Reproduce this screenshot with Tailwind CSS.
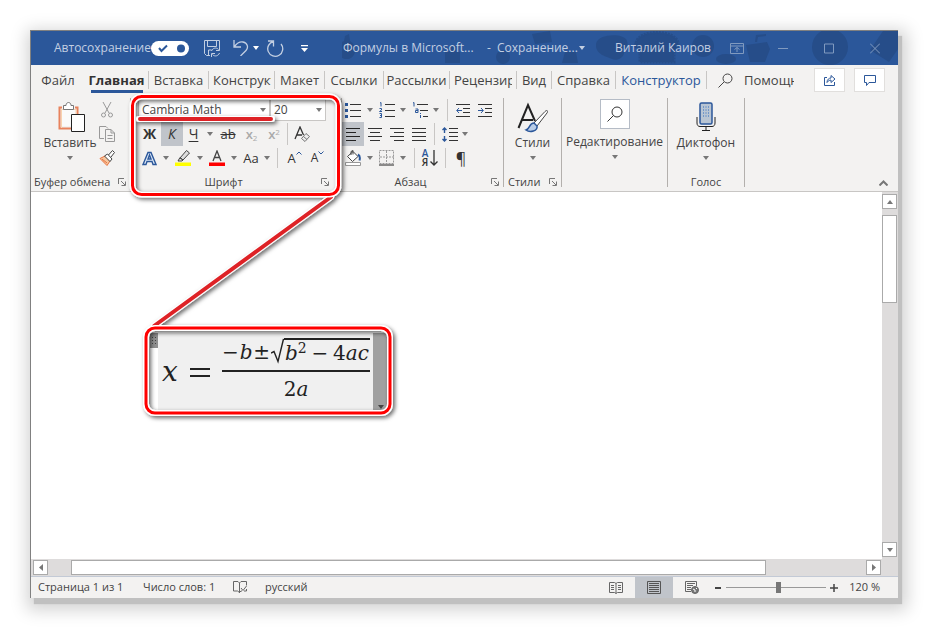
<!DOCTYPE html>
<html lang="ru">
<head>
    <meta charset="UTF-8">
    <meta name="viewport" content="width=device-width, initial-scale=1.0">
    <title>Формулы в Microsoft Word</title>
    <script src="https://cdn.jsdelivr.net/npm/@tailwindcss/browser@4"></script>
</head>
<body class="bg-white font-['Open_Sans','Noto_Sans',sans-serif] text-xs text-[#444]">

    <!-- Shared icons -->
    <svg class="hidden">
        <symbol id="caret" viewBox="0 0 6 4"><path d="M0 0h6L3 4z" fill="currentColor"/></symbol>
        <symbol id="launcher" viewBox="0 0 8 8"><path d="M.5 6V.5H6M3 3l4 4M7.500 3.500v4h-4" fill="none" stroke="#777"/></symbol>
    </svg>

    <div class="relative flex min-h-screen p-[30px]">
        <div class="flex min-w-0 flex-1 flex-col border-t border-l border-[#808080] bg-white shadow-[4px_6px_1px_0_#c0c0c0,3px_6px_16px_6px_rgba(0,0,0,0.18)]">

            <!-- Title bar -->
            <header class="relative flex h-[34px] shrink-0 items-center overflow-hidden bg-[#2b579a] text-[#c3cfe2]">
                <svg class="absolute top-0 right-0 h-[34px] w-[556px]" viewBox="0 0 556 34" fill="#264d89">
                    <path d="M24 28c-10-3-10-14-1-18l1-5 4-2 1 7c7 4 7 15-1 18zM124 32V21h4v-6h7v6h4v11z" transform="translate(-21 0)"/>
                    <circle cx="161" cy="26" r="7"/><path d="M190 3l18-3 2 11-17 2zM220 32l3-11h11l2 11z"/>
                    <path d="M254 13c2-11 29-11 31-3 2 6-2 6-3 12s-8 8-12 6-17-4-16-15z"/>
                    <path d="M294 12c2-14 40-14 42 0 1 5-4 6-4 10v9h-34v-9c-1-4-5-5-4-10z" stroke="#264d89" stroke-width="3" stroke-dasharray="2 1"/>
                    <circle cx="361" cy="15" r="11"/><ellipse cx="384" cy="28" rx="10" ry="5"/>
                    <path d="M404 14l21-3 3 7-5 13h-15zM413 11l1-7 10-1v2l-8 1-1 5z"/>
                    <circle cx="488" cy="16" r="18"/><path d="M528 19L541 0h15v18l-9 13z"/>
                </svg>
                <label for="autosave" class="relative ml-[23px] w-[97px]">Автосохранение</label>
                <div class="relative h-[15px] w-[38px] shrink-0 rounded-full bg-white">
                    <input id="autosave" type="checkbox" checked class="absolute inset-0 h-full w-full appearance-none rounded-full">
                    <svg class="pointer-events-none absolute inset-0" viewBox="0 0 38 15" fill="none"><path d="M8 7l2.500 3L16 4.500" stroke="#2b579a" stroke-width="2"/><circle cx="30" cy="7.500" r="4" fill="#2b579a"/></svg>
                </div>
                <button class="relative ml-[15px]" aria-label="Сохранить">
                    <svg class="h-[18px] w-[17px]" viewBox="0 0 17 18" fill="none" stroke="currentColor"><path d="M6 16.500H2.500l-2-2V1.500h15v7M3.500 1.500v6h9v-6M4.500 16v-5h3M7.500 12c1-3 5-4 7-1.500M15.500 8v3.500H12M15.500 14c-1 3-5 4-7 1.500M7.500 18v-3.500H11"/></svg>
                </button>
                <button class="relative ml-3" aria-label="Отменить">
                    <svg class="h-4 w-4" viewBox="0 0 16 16" fill="none" stroke="currentColor" stroke-width="1.300"><path d="M1 0v7h7M1.500 6.500C4 3 7 1.500 10 2c5 1 5.500 6 3 8.500L7.500 16"/></svg>
                </button>
                <button class="relative ml-1 text-white" aria-label="Список отмены"><svg class="h-1 w-1.5"><use href="#caret"/></svg></button>
                <button class="relative ml-2" aria-label="Повторить">
                    <svg class="h-[17px] w-[17px]" viewBox="0 0 17 17" fill="none" stroke="currentColor" stroke-width="1.300"><path d="M1 1h5.500v5.500M6.500 1.500A7.500 7.500 0 1 0 14 4"/></svg>
                </button>
                <button class="relative ml-[17px] text-white" aria-label="Настройка панели"><svg class="h-[7px] w-[7px]" viewBox="0 0 7 7" fill="currentColor"><path d="M0 0h7v1.200H0zM0 3h7L3.500 7z"/></svg></button>
                <span class="relative ml-[35px] w-36 whitespace-nowrap">Формулы в Microsoft...</span>
                <span class="relative w-2.5">-</span>
                <button class="relative flex w-[88px] items-center justify-between whitespace-nowrap">Сохранение... <svg class="h-1 w-1.5"><use href="#caret"/></svg></button>
                <span class="relative ml-[30px] whitespace-nowrap">Виталий Каиров</span>
                <div class="relative ml-auto flex text-[#809abf]">
                    <button class="mr-[34px]" aria-label="Параметры ленты"><svg class="h-[11px] w-[14px]" viewBox="0 0 14 11" fill="none" stroke="currentColor"><path d="M.5.5h13v10H.5zM.5 3h13M7 9V4.500M4.500 6.500L7 4.500l2.500 2"/></svg></button>
                    <button class="mr-9" aria-label="Свернуть"><svg class="h-[11px] w-[10px]" viewBox="0 0 10 11" stroke="currentColor"><path d="M0 5.500h10"/></svg></button>
                    <button class="mr-9" aria-label="Развернуть"><svg class="h-[11px] w-[10px]" viewBox="0 0 10 11" fill="none" stroke="currentColor"><path d="M.5 1h9v9h-9z"/></svg></button>
                    <button class="mr-[18px]" aria-label="Закрыть"><svg class="h-[11px] w-[10px]" viewBox="0 0 10 11" stroke="currentColor"><path d="M0 .5l10 10M10 .5l-10 10"/></svg></button>
                </div>
            </header>

            <!-- Tabs -->
            <nav class="flex h-[30px] shrink-0 items-center bg-[#f3f2f1] text-[13px] leading-[18px] whitespace-nowrap">
                <button class="w-[54px]">Файл</button>
                <button class="relative w-16 border-r border-[#c8c6c4] font-bold text-[#333]">Главная<span class="absolute -bottom-[4px] left-1.5 h-[3px] w-[52px] bg-[#2b579a]"></span></button>
                <button class="w-[60px] border-r border-[#c8c6c4]">Вставка</button>
                <button class="w-[66px] border-r border-[#c8c6c4] pr-[3px] pl-1"><span class="block overflow-hidden text-left">Конструктор</span></button>
                <button class="w-[50px] border-r border-[#c8c6c4]">Макет</button>
                <button class="w-[59px] border-r border-[#c8c6c4]">Ссылки</button>
                <button class="w-[66px] border-r border-[#c8c6c4]">Рассылки</button>
                <button class="w-[67px] border-r border-[#c8c6c4] px-1"><span class="block overflow-hidden text-left">Рецензирование</span></button>
                <button class="w-[35px] border-r border-[#c8c6c4]">Вид</button>
                <button class="w-16 border-r border-[#c8c6c4]">Справка</button>
                <button class="w-[91px] border-r border-[#c8c6c4] text-[#2b579a]">Конструктор</button>
                <button class="ml-[11px] flex items-center gap-[11px]">
                    <svg class="h-[15px] w-[15px]" viewBox="0 0 15 15" fill="none" stroke="#444"><circle cx="9.500" cy="5.500" r="4.500"/><path d="M6 9l-5.500 5.500"/></svg>
                    <span class="block w-[50px] overflow-hidden text-left">Помощник</span>
                </button>
                <div class="mr-[13px] ml-auto flex gap-[9px]">
                    <button class="flex h-6 w-[31px] items-center justify-center border border-[#e1dfdd] bg-white" aria-label="Поделиться">
                        <svg class="h-3 w-3" viewBox="0 0 12 12" fill="none" stroke="#2b579a"><path d="M3 3.500H.5v8h10V8M3 8.500c0-3 2-4.500 4-4.500V1.500l4 3.500-4 3.500V6C5.500 6 4 7 3 8.500z"/></svg>
                    </button>
                    <button class="flex h-6 w-[31px] items-center justify-center border border-[#e1dfdd] bg-white" aria-label="Примечания">
                        <svg class="h-[11px] w-3" viewBox="0 0 12 11" fill="none" stroke="#2b579a"><path d="M.5.5h11v7H5l-2.500 3v-3h-2z"/></svg>
                    </button>
                </div>
            </nav>

            <!-- Ribbon -->
            <div class="flex h-[97px] shrink-0 border-b border-[#c8c6c4] bg-[#f3f2f1] pt-[3px] pb-1">

                <section class="flex w-[100px] flex-col border-r border-[#b3b0ad]">
                    <div class="flex flex-1">
                        <button class="ml-[11px] flex w-14 flex-col items-center pt-1">
                            <svg class="ml-1 h-8 w-7" viewBox="0 0 28 32" fill="none"><path d="M4 5.500H1.500v21H14M17 5.500h2.500V12" stroke="#e8825d" stroke-width="2"/><path d="M4 8v16h10V13h4V8z" fill="#fafafa"/><path d="M3.500 26V7.500H18V12" stroke="#f8d3b0"/><path d="M5.500 7.500v-4H8c0-4 5-4 5 0h2.500v4z" fill="#fff" stroke="#777"/><path d="M13.500 12.500h13v17h-13z" fill="#fff" stroke="#222"/></svg>
                            <span class="leading-[18px]">Вставить</span>
                            <svg class="mt-1 h-1 w-1.5 text-[#777]"><use href="#caret"/></svg>
                        </button>
                        <div class="flex flex-col items-center">
                            <button class="flex h-6 w-[18px] items-center justify-center" aria-label="Вырезать"><svg class="h-4 w-3" viewBox="0 0 12 16" fill="none" stroke="#999"><path d="M2 0l6 11M10 0L4 11"/><circle cx="2.500" cy="13" r="2"/><circle cx="9.500" cy="13" r="2"/></svg></button>
                            <button class="flex h-6 w-[18px] items-center justify-center" aria-label="Копировать"><svg class="h-4 w-4" viewBox="0 0 16 16" fill="none" stroke="#999"><path d="M5 12.500H.5V.5H7l2 2M6.500 3.500H12l3.500 3.500v8.500h-9zM12 3.500V7h3.500M8.500 9.500h5M8.500 12.500h5"/></svg></button>
                            <button class="flex h-6 w-[18px] items-center justify-center" aria-label="Формат по образцу"><svg class="h-4 w-4" viewBox="0 0 16 16"><path d="M1 8.500L6 6l5 5-3 4.500z" fill="#f6c7a0" stroke="#e8723c"/><path d="M3 9l5 4" stroke="#e8723c"/><path d="M5.500 6l3-2 4.500 5-2 2.500zM9.500 5l4-4.500 2 2L12 7" fill="#fff" stroke="#444"/></svg></button>
                        </div>
                    </div>
                    <div class="flex h-2.5 items-center justify-between pr-1 pl-[3px] text-[11px] whitespace-nowrap"><h2>Буфер обмена</h2><button aria-label="Параметры буфера"><svg class="h-2 w-2"><use href="#launcher"/></svg></button></div>
                </section>

                <section class="flex w-[211px] flex-col border-r border-[#b3b0ad] pl-[7px]">
                    <div class="flex-1">
                        <div class="flex h-6 items-center">
                            <div class="relative w-[132px]">
                                <select aria-label="Шрифт" class="block h-[22px] w-full appearance-none border border-[#c8c6c4] bg-white px-[3px] text-xs"><option>Cambria Math</option></select>
                                <svg class="pointer-events-none absolute top-[9px] right-1 h-1 w-1.5 text-[#777]"><use href="#caret"/></svg>
                            </div>
                            <div class="relative w-[56px]">
                                <select aria-label="Размер" class="block h-[22px] w-full appearance-none border border-[#c8c6c4] bg-white px-[3px] text-xs"><option>20</option></select>
                                <svg class="pointer-events-none absolute top-[9px] right-1 h-1 w-1.5 text-[#777]"><use href="#caret"/></svg>
                            </div>
                        </div>
                        <div class="flex h-6 items-center text-sm text-[#333]">
                            <button class="w-[23px] font-bold">Ж</button>
                            <button class="h-6 w-[22px] bg-[#c0c4ca] italic">К</button>
                            <button class="w-[21px] underline underline-offset-2">Ч</button>
                            <button class="flex w-3 justify-center text-[#777]" aria-label="Вид подчёркивания"><svg class="h-1 w-1.5"><use href="#caret"/></svg></button>
                            <button class="w-6 text-[13px] line-through">ab</button>
                            <button class="w-[23px] text-[13px] font-semibold text-[#aaa]">x<sub class="text-[8px] font-normal">2</sub></button>
                            <button class="w-[22px] text-[13px] font-semibold text-[#aaa]">x<sup class="text-[8px] font-normal">2</sup></button>
                            <span class="mx-0.5 h-[22px] w-px bg-[#c8c6c4]"></span>
                            <button class="flex w-6 justify-center" aria-label="Очистить формат"><svg class="h-4 w-4" viewBox="0 0 16 16" fill="none" stroke="#333"><path d="M1 13L6 1l3.500 8M3 9h5"  stroke-width="1.300"/><path d="M7.500 12.500l4.500-5 3.500 3-4.500 5zM9.500 10.500l3.500 3" fill="#eee" stroke="#777"/></svg></button>
                        </div>
                        <div class="flex h-6 items-center text-sm text-[#333]">
                            <button class="flex w-[22px] justify-center" aria-label="Текстовые эффекты"><svg class="h-[15px] w-[15px]" viewBox="0 0 15 15"><path d="M1 13.500L6 1.500h3l5 12h-3l-1-3H5l-1 3zM6 8h3L7.500 4z" fill="#dce8f7" stroke="#2b579a" stroke-width="1.400"/></svg></button>
                            <button class="flex w-3 justify-center text-[#777]" aria-label="Список эффектов"><svg class="h-1 w-1.5"><use href="#caret"/></svg></button>
                            <button class="flex w-[22px] justify-center" aria-label="Цвет выделения"><svg class="h-4 w-4" viewBox="0 0 16 16" fill="none" stroke="#444"><path d="M0 12.500h16v3.500H0z" fill="#ff0" stroke="none"/><path d="M5 8l6.500-7.500 3 2.500L8 10zM5 7.500L3 11h4l1-1z" fill="#ddd"/></svg></button>
                            <button class="flex w-3 justify-center text-[#777]" aria-label="Цвета выделения"><svg class="h-1 w-1.5"><use href="#caret"/></svg></button>
                            <button class="flex w-[22px] justify-center" aria-label="Цвет текста"><svg class="h-4 w-4" viewBox="0 0 16 16" fill="none" stroke="#444" stroke-width="1.300"><path d="M0 12.500h16v3.500H0z" fill="#f00" stroke="none"/><path d="M4 11l4-10 4 10M5.500 7.500h5"/></svg></button>
                            <button class="flex w-3 justify-center text-[#777]" aria-label="Цвета текста"><svg class="h-1 w-1.5"><use href="#caret"/></svg></button>
                            <button class="w-[22px] text-[13px]">Aa</button>
                            <button class="flex w-2.5 justify-center text-[#777]" aria-label="Варианты регистра"><svg class="h-1 w-1.5"><use href="#caret"/></svg></button>
                            <span class="mx-[5px] h-5 w-px bg-[#c8c6c4]"></span>
                            <button class="flex w-[23px] items-start justify-center text-[13px] leading-[18px]">A<svg class="mt-0.5 h-1 w-1.5" viewBox="0 0 6 4" fill="none" stroke="#2b579a"><path d="M.5 3.500L3 1l2.500 2.500"/></svg></button>
                            <button class="flex w-[23px] items-start justify-center text-xs leading-[18px]">A<svg class="mt-0.5 h-1 w-1.5" viewBox="0 0 6 4" fill="none" stroke="#2b579a"><path d="M.5.5L3 3 5.500.5"/></svg></button>
                        </div>
                    </div>
                    <div class="flex h-2.5 items-center justify-between pr-3 text-[11px]"><h2 class="flex-1 pr-3 text-center">Шрифт</h2><button aria-label="Параметры шрифта"><svg class="h-2 w-2"><use href="#launcher"/></svg></button></div>
                </section>

                <section class="flex w-[162px] flex-col border-r border-[#b3b0ad]">
                    <div class="flex-1 text-[#777]">
                        <div class="flex h-6 items-center">
                            <button class="flex w-[22px] justify-center" aria-label="Маркеры"><svg class="h-4 w-4" viewBox="0 0 16 16"><path d="M0 1h3v3H0zM0 7h3v3H0zM0 13h3v3H0z" fill="#2b579a"/><path d="M5 2.500h11M5 8.500h11M5 14.500h11" stroke="#333"/></svg></button>
                            <button class="flex w-3 justify-center" aria-label="Виды маркеров"><svg class="h-1 w-1.5"><use href="#caret"/></svg></button>
                            <button class="flex w-[22px] justify-center" aria-label="Нумерация"><svg class="h-4 w-4" viewBox="0 0 16 16" fill="none"><path d="M1 1l1-.5v4M.5 6.500h2v1.500l-2 1.500h2.500M.5 11.500h2v4h-2M1 13.500h1.500" stroke="#2b579a"/><path d="M6 2.500h10M6 8.500h10M6 14.500h10" stroke="#333"/></svg></button>
                            <button class="flex w-2.5 justify-center" aria-label="Виды нумерации"><svg class="h-1 w-1.5"><use href="#caret"/></svg></button>
                            <button class="flex w-6 justify-center" aria-label="Многоуровневый список"><svg class="h-4 w-4" viewBox="0 0 16 16" fill="none"><path d="M1 1l1-.5v4M3.500 7h2.500v3.500H3.500V8.500H6M8.500 11v1M8.500 13v3" stroke="#2b579a"/><path d="M5 2.500h11M8 8.500h8M11 14.500h5" stroke="#333"/></svg></button>
                            <button class="flex w-2 justify-center" aria-label="Виды списков"><svg class="h-1 w-1.5"><use href="#caret"/></svg></button>
                            <span class="mr-1 ml-[7px] h-[22px] w-px bg-[#c8c6c4]"></span>
                            <button class="flex w-[22px] justify-center" aria-label="Уменьшить отступ"><svg class="h-[13px] w-3.5" viewBox="0 0 14 13" fill="none" stroke="#333"><path d="M0 .5h14M7 4.500h7M7 8.500h7M0 12.500h14"/><path d="M6 6.500H1M3 4L.7 6.500 3 9" stroke="#2b579a"/></svg></button>
                            <button class="flex w-[22px] justify-center" aria-label="Увеличить отступ"><svg class="h-[13px] w-3.5" viewBox="0 0 14 13" fill="none" stroke="#333"><path d="M0 .5h14M7 4.500h7M7 8.500h7M0 12.500h14"/><path d="M0 6.500h5M3 4l2.300 2.500L3 9" stroke="#2b579a"/></svg></button>
                        </div>
                        <div class="flex h-6 items-center">
                            <button class="flex h-6 w-[22px] items-center justify-center bg-[#c0c4ca]" aria-label="По левому краю"><svg class="h-[13px] w-3.5" viewBox="0 0 14 13" stroke="#222"><path d="M0 .5h14M0 4.500h10M0 8.500h14M0 12.500h10"/></svg></button>
                            <button class="flex w-[22px] justify-center" aria-label="По центру"><svg class="h-[13px] w-3.5" viewBox="0 0 14 13" stroke="#333"><path d="M0 .5h14M2 4.500h10M0 8.500h14M2 12.500h10"/></svg></button>
                            <button class="flex w-[22px] justify-center" aria-label="По правому краю"><svg class="h-[13px] w-3.5" viewBox="0 0 14 13" stroke="#333"><path d="M0 .5h14M4 4.500h10M0 8.500h14M4 12.500h10"/></svg></button>
                            <button class="flex w-[22px] justify-center" aria-label="По ширине"><svg class="h-[13px] w-3.5" viewBox="0 0 14 13" stroke="#333"><path d="M0 .5h14M0 4.500h14M0 8.500h14M0 12.500h14"/></svg></button>
                            <span class="mx-1 h-[22px] w-px bg-[#c8c6c4]"></span>
                            <button class="flex w-[22px] justify-center" aria-label="Интервал"><svg class="h-[15px] w-4" viewBox="0 0 16 15" fill="none"><path d="M2.500 1v5M0.500 3L2.500 1l2 2M2.500 9v5M.5 12l2 2 2-2" stroke="#2b579a" stroke-width="1.400"/><path d="M7 1.500h9M7 5.500h9M7 9.500h9M7 13.500h9" stroke="#333"/></svg></button>
                            <button class="flex w-2 justify-center" aria-label="Виды интервалов"><svg class="h-1 w-1.5"><use href="#caret"/></svg></button>
                        </div>
                        <div class="flex h-6 items-center">
                            <button class="flex w-[22px] justify-center" aria-label="Заливка"><svg class="h-4 w-4" viewBox="0 0 16 16" fill="none"><path d="M8 1.500l5 5-5.500 5-5-5zM6 5V1.500L8 .5v4" fill="#fff" stroke="#444"/><path d="M13 4.500c2 1 2 4 1.500 6" stroke="#2b579a" stroke-width="2"/><path d="M.5 12.500h15v3H.5z" fill="#fff" stroke="#999"/></svg></button>
                            <button class="flex w-3 justify-center" aria-label="Цвета заливки"><svg class="h-1 w-1.5"><use href="#caret"/></svg></button>
                            <button class="flex w-[22px] justify-center" aria-label="Границы"><svg class="h-4 w-4" viewBox="0 0 16 16" fill="none"><path d="M.5.5h14v13H.5zM7.500 1v12M1 7h14" stroke="#999" stroke-dasharray="2 1"/><path d="M0 15h15" stroke="#222"/></svg></button>
                            <button class="flex w-2.5 justify-center" aria-label="Виды границ"><svg class="h-1 w-1.5"><use href="#caret"/></svg></button>
                            <span class="mr-1 ml-[6px] h-5 w-px bg-[#c8c6c4]"></span>
                            <button class="flex w-[22px] items-center justify-center" aria-label="Сортировка"><span class="flex flex-col text-[10px] leading-[9px] font-semibold"><span class="text-[#2b579a]">А</span><span class="text-[#333]">Я</span></span><svg class="ml-0.5 h-4 w-2" viewBox="0 0 8 16" fill="none" stroke="#333" stroke-width="1.300"><path d="M4 0v15M.5 11.500L4 15l3.500-3.500"/></svg></button>
                            <span class="mx-1 h-5 w-px bg-[#c8c6c4]"></span>
                            <button class="w-[22px] text-base leading-5 text-[#333]">¶</button>
                        </div>
                    </div>
                    <div class="flex h-2.5 items-center pr-1 text-[11px]"><h2 class="flex-1 pr-3 text-center">Абзац</h2><button aria-label="Параметры абзаца"><svg class="h-2 w-2"><use href="#launcher"/></svg></button></div>
                </section>

                <section class="flex w-[58px] flex-col border-r border-[#b3b0ad]">
                    <button class="flex flex-1 flex-col items-center pt-1">
                        <svg class="h-8 w-[31px]" viewBox="0 0 31 32" fill="none"><path d="M1.500 26L11 3l7 16M5 18h11" stroke="#222" stroke-width="2"/><path d="M17 21L28 9.500c2-2 3.500-.5 2 1.500L20 24z" fill="#fff" stroke="#444"/><path d="M17 21c-5 0-4 6-8 7 4 3 12 1 11-4z" fill="#b9cde8" stroke="#2b579a" stroke-width="1.500"/></svg>
                        <span class="leading-[18px]">Стили</span>
                        <svg class="mt-1 h-1 w-1.5 text-[#777]"><use href="#caret"/></svg>
                    </button>
                    <div class="flex h-2.5 items-center justify-between px-1 text-[11px]"><h2>Стили</h2><button aria-label="Параметры стилей"><svg class="h-2 w-2"><use href="#launcher"/></svg></button></div>
                </section>

                <section class="flex w-[106px] flex-col border-r border-[#b3b0ad]">
                    <button class="flex flex-col items-center pt-px">
                        <span class="flex h-[30px] w-[30px] items-center justify-center border border-[#b5bcc6] bg-white"><svg class="h-4 w-4" viewBox="0 0 16 16" fill="none" stroke="#333"><circle cx="10" cy="6" r="5"/><path d="M6.500 9.500L.5 15.500"/></svg></span>
                        <span class="mt-1 leading-[18px]">Редактирование</span>
                        <svg class="mt-1 h-1 w-1.5 text-[#777]"><use href="#caret"/></svg>
                    </button>
                </section>

                <section class="flex w-[77px] flex-col border-r border-[#b3b0ad]">
                    <button class="flex flex-1 flex-col items-center pt-1">
                        <svg class="h-8 w-5" viewBox="0 0 20 32" fill="none"><rect x="4" y="1" width="12" height="21" rx="1.500" fill="#b9c5d3" stroke="#2b579a" stroke-width="1.500"/><path d="M7 5h6M7 8h6M7 11h6M7 14h6" stroke="#2b6bc0" stroke-dasharray="1 1.500"/><path d="M1 15v6c0 2 1 3.500 3 3.500h12c2 0 3-1.500 3-3.500v-6M10 24.500V28M6 28.500h8" stroke="#222"/></svg>
                        <span class="leading-[18px]">Диктофон</span>
                        <svg class="mt-1 h-1 w-1.5 text-[#777]"><use href="#caret"/></svg>
                    </button>
                    <h2 class="flex h-2.5 items-center justify-center text-[11px]">Голос</h2>
                </section>

                <button class="mt-auto mr-2.5 mb-px ml-auto" aria-label="Свернуть ленту"><svg class="block h-1.5 w-[9px]" viewBox="0 0 9 6" fill="none" stroke="#777" stroke-width="2"><path d="M.5 5.500l4-4 4 4"/></svg></button>
            </div>

            <!-- Document and scrollbars -->
            <div class="flex flex-1">
                <main class="flex-1 pt-[141px] pl-[119px]">
                    <div class="flex h-[78px] w-[238px] bg-[#f0f0f0] font-['DejaVu_Serif',serif] text-xl text-[#222]">
                        <div class="w-2 bg-white"><div class="flex h-[15px] flex-col items-center justify-center bg-[#909090] text-[#444]"><svg class="h-2.5 w-1" viewBox="0 0 4 10" fill="currentColor"><path d="M0 1h1v1H0zM3 1h1v1H3zM0 4h1v1H0zM3 4h1v1H3zM0 7h1v1H0zM3 7h1v1H3z"/></svg></div></div>
                        <div class="flex flex-1 items-center justify-between pr-[3px] pl-1">
                            <i class="text-[28px] leading-8">x</i>
                            <svg class="h-[9px] w-5" viewBox="0 0 20 9" stroke="#222" stroke-width="2"><path d="M0 1h20M0 8h20"/></svg>
                            <div class="flex w-[148px] flex-col items-center pb-1">
                                <div class="flex w-full items-center justify-between pb-1 leading-[26px]">
                                    <span>−</span><i>b</i><span>±</span>
                                    <span class="flex">
                                        <svg class="h-[26px] w-[13px]" viewBox="0 0 13 26" fill="none" stroke="#222"><path d="M0 15l3-1.500 4 10L12.500 1" stroke-width="1.400"/></svg>
                                        <span class="flex w-[86px] justify-between border-t-2 border-[#222] px-px"><span><i>b</i><sup class="text-sm leading-none">2</sup></span><span>−</span><span>4<i>ac</i></span></span>
                                    </span>
                                </div>
                                <div class="w-full border-t-2 border-[#222] pt-1 text-center leading-[26px]">2<i>a</i></div>
                            </div>
                        </div>
                        <div class="flex w-[15px] items-end justify-center bg-[#a0a0a0] pb-0.5 text-[#444]"><svg class="h-1 w-1.5"><use href="#caret"/></svg></div>
                    </div>
                </main>
                <div class="flex w-4 flex-col bg-[#dedcdc] pt-0.5 pb-0.5 text-[#777]">
                    <button class="flex h-[15px] w-[15px] items-center justify-center border border-[#aaa] bg-white" aria-label="Вверх"><svg class="h-1 w-1.5 rotate-180"><use href="#caret"/></svg></button>
                    <div class="mt-[6px] h-[88px] w-[15px] border border-[#aaa] bg-white"></div>
                    <button class="mt-auto flex h-[15px] w-[15px] items-center justify-center border border-[#aaa] bg-white" aria-label="Вниз"><svg class="h-1 w-1.5"><use href="#caret"/></svg></button>
                </div>
            </div>
            <div class="flex h-[17px] shrink-0 items-center bg-[#dedcdc] pr-[17px] pl-0.5 text-[#777]">
                <button class="flex h-[15px] w-[15px] items-center justify-center border border-[#aaa] bg-white" aria-label="Влево"><svg class="h-[7px] w-1" viewBox="0 0 4 7" fill="currentColor"><path d="M4 0v7L0 3.500z"/></svg></button>
                <div class="ml-[23px] h-[15px] w-[695px] border border-[#aaa] bg-white"></div>
                <button class="ml-auto flex h-[15px] w-[15px] items-center justify-center border border-[#aaa] bg-white" aria-label="Вправо"><svg class="h-[7px] w-1" viewBox="0 0 4 7" fill="currentColor"><path d="M0 0v7l4-3.500z"/></svg></button>
            </div>

            <!-- Status bar -->
            <footer class="flex h-[22px] shrink-0 items-center border-t border-[#c3cad6] bg-[#f3f2f1] text-[11px] whitespace-nowrap">
                <button class="ml-[7px] w-[105px] text-left">Страница 1 из 1</button>
                <button class="w-[90px] text-left">Число слов: 1</button>
                <button class="w-8" aria-label="Правописание"><svg class="h-[13px] w-3.5" viewBox="0 0 14 13" fill="none" stroke="#666"><path d="M6.500 12V2L5 .5H.5V10h4l2 1.500L8 10h1M6.500 2L8 .5h5.500v4M8 7l2 2.500L13.500 5M13.500 8v2H11"/></svg></button>
                <button>русский</button>
                <div class="ml-auto flex h-full items-center">
                    <button class="flex h-full w-[38px] items-center justify-center" aria-label="Режим чтения"><svg class="h-3 w-3.5" viewBox="0 0 14 12" fill="none" stroke="#666"><path d="M7 11.500V1.500L5.500.5h-5v10h5l1.500 1 1.500-1h5V.5h-5L7 1.500M2 3.500h3M2 5.500h3M2 7.500h3M9 3.500h3M9 5.500h3M9 7.500h3"/></svg></button>
                    <button class="flex h-full w-[38px] items-center justify-center bg-[#c0c4ca]" aria-label="Разметка страницы"><svg class="h-[13px] w-3.5" viewBox="0 0 14 13" fill="none" stroke="#555"><path d="M.5.5h13v12H.5zM2 2.500h10M2 4.500h10M2 6.500h10M2 8.500h10M2 10.500h10"/></svg></button>
                    <button class="flex h-full w-[38px] items-center justify-center" aria-label="Веб-документ"><svg class="h-[13px] w-3.5" viewBox="0 0 14 13" fill="none" stroke="#666"><path d="M6 10.500H.5V.5h11V5M2 2.500h8M2 4.500h6M2 6.500h4M2 8.500h4"/><circle cx="10" cy="9" r="3.500" fill="#777"/><path d="M8 8l2 1v2M11 7l1 1" stroke="#fff"/></svg></button>
                    <button class="ml-1 flex h-4 w-2 items-center" aria-label="Уменьшить"><span class="h-0.5 w-1.5 bg-[#444]"></span></button>
                    <input type="range" min="0" max="200" value="104" aria-label="Масштаб" class="mx-[3px] h-3 w-[100px] appearance-none bg-transparent bg-[linear-gradient(#999,#999)] bg-[length:100%_1px] bg-center bg-no-repeat [&::-webkit-slider-thumb]:h-[11px] [&::-webkit-slider-thumb]:w-[5px] [&::-webkit-slider-thumb]:appearance-none [&::-webkit-slider-thumb]:bg-[#777]">
                    <button class="flex w-2.5 justify-center" aria-label="Увеличить"><svg class="h-2 w-2" viewBox="0 0 8 8" stroke="#444" stroke-width="1.500"><path d="M0 4h8M4 0v8"/></svg></button>
                    <button class="mr-[18px] ml-2.5">120 %</button>
                </div>
            </footer>
        </div>

        <!-- Callouts -->
        <svg class="pointer-events-none absolute top-0 left-0 h-[628px] w-[928px]" viewBox="0 0 928 628" fill="none">
            <defs><filter id="drop" x="-10%" y="-10%" width="120%" height="120%"><feDropShadow dx="2" dy="2" stdDeviation="2" flood-color="#000" flood-opacity=".6"/></filter></defs>
            <g filter="url(#drop)" stroke-linecap="round">
                <path d="M331 197L154 326M139 119h133" stroke="#fff" stroke-width="6"/>
                <path d="M331 197L154 326M140 119h131" stroke="#de2226" stroke-width="4"/>
                <rect x="132.500" y="96.500" width="206" height="98" rx="9" stroke="#fff" stroke-width="6"/>
                <rect x="132.500" y="96.500" width="206" height="98" rx="9" stroke="#f00" stroke-width="3"/>
                <rect x="146" y="328" width="244" height="85" rx="9" stroke="#fff" stroke-width="6"/>
                <rect x="146" y="328" width="244" height="85" rx="9" stroke="#f00" stroke-width="3"/>
            </g>
        </svg>
    </div>
</body>
</html>
